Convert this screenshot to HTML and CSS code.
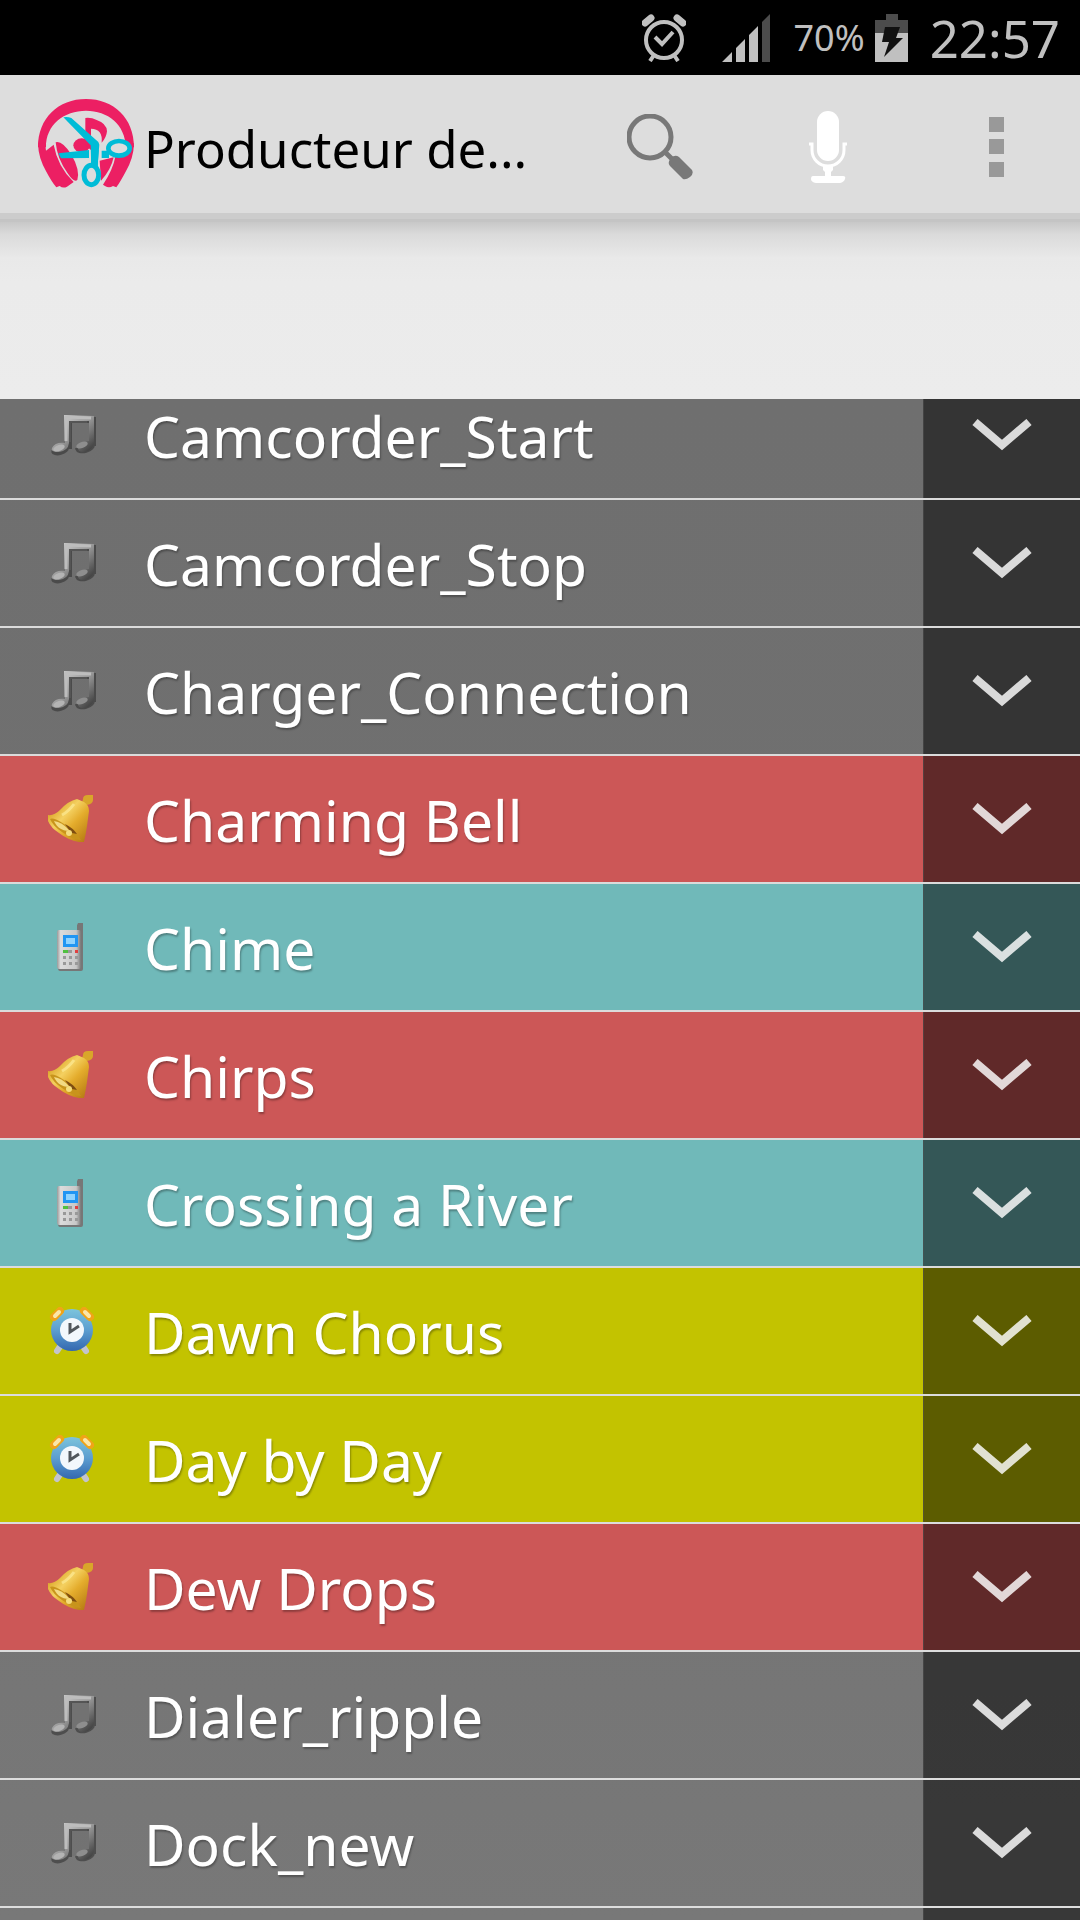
FILE: index.html
```
<!DOCTYPE html>
<html lang="fr">
    <head>
        <meta charset="utf-8">
        <meta name="viewport" content="width=device-width, initial-scale=1.0">
        <title>Producteur de sonneries</title>
        <link rel="stylesheet" href="styles.css">
    </head>
    <body>
        <!-- shared icons -->
        <svg class="defs" width="0" height="0">
            <defs>
                <linearGradient id="noteFill" x1="0" y1="0" x2="1" y2="1">
                    <stop offset="0" stop-color="#e2e2e2"/>
                    <stop offset="0.5" stop-color="#999"/>
                    <stop offset="1" stop-color="#333"/>
                </linearGradient>
                <linearGradient id="bellFill" x1="0" y1="0" x2="1" y2="1">
                    <stop offset="0.1" stop-color="#d49a18"/>
                    <stop offset="0.4" stop-color="#f4d060"/>
                    <stop offset="0.6" stop-color="#e4ac2c"/>
                    <stop offset="1" stop-color="#b07410"/>
                </linearGradient>
                <linearGradient id="phoneFill" x1="0" y1="0" x2="1" y2="0">
                    <stop offset="0" stop-color="#999"/>
                    <stop offset="0.15" stop-color="#dcdcdc"/>
                    <stop offset="0.8" stop-color="#c8c8c8"/>
                    <stop offset="1" stop-color="#777"/>
                </linearGradient>
                <linearGradient id="clockFill" x1="0" y1="0" x2="0" y2="1">
                    <stop offset="0" stop-color="#7cc4dc"/>
                    <stop offset="0.5" stop-color="#5c9ed0"/>
                    <stop offset="1" stop-color="#3468b0"/>
                </linearGradient>
            </defs>
            <symbol id="music" viewBox="0 0 48 48">
                <g fill="#333" opacity="0.6">
                    <path d="M18 6h30v29h-5V13H24v25h-6z"/>
                    <ellipse cx="12" cy="39" rx="9" ry="5" transform="rotate(-15 12 39)"/>
                    <ellipse cx="37" cy="36" rx="10" ry="6" transform="rotate(-15 37 36)"/>
                    <path d="M24 12h19v25H24z" fill="#707070"/>
                </g>
                <path fill="url(#noteFill)" d="M16 4l30 1v25q0 9-10 11q-7 0-6-5q2-6 11-6V10H21v22q-1 8-10 9q-9 0-7-4q3-6 13-5z"/>
                <path fill="none" stroke="#555" stroke-width="2" d="M22 31V11h17"/>
                <path fill="none" stroke="#bdbdbd" stroke-width="3" d="M18 30V6l25 1"/>
                <ellipse cx="11" cy="37" rx="6" ry="3" fill="#b4b4b4" transform="rotate(-20 11 37)"/>
                <ellipse cx="34" cy="34" rx="6" ry="3" fill="#8e8e8e" transform="rotate(-20 34 34)"/>
            </symbol>
            <symbol id="bell" viewBox="0 0 48 48">
                <path fill="#d9a62a" d="M35 4q0-4 5-4h5v5q0 4-6 5l-5-2z"/>
                <path fill="url(#bellFill)" d="M36 7q5 3 5 9l-2 15q-1 7-3 16h-5Q20 45 11 38Q3 33 0 26v-6q6 1 12-5q8-9 17-11z"/>
                <path fill="#c8941c" d="M2 24q3-2 14 5q13 8 17 16q-8 0-19-8Q5 31 2 24z"/>
                <path fill="#f2da84" d="M6 26q8 1 15 9q-3 2-8-1q-5-3-7-8z"/>
                <path fill="#7e4d10" d="M17 29q8 4 12 10l-5-1q-4-4-7-9z"/>
                <circle cx="21" cy="38" r="3" fill="#f4dc7e"/>
                <path fill="none" stroke="#fff0a0" stroke-width="3" opacity="0.6" d="M14 20q7-4 12-11"/>
            </symbol>
            <symbol id="phone" viewBox="0 0 48 48">
                <path fill="#777" d="M30 0h5v46q0 2-2 2H12q-2 0-2-3z"/>
                <path fill="#70b9b9" d="M9 0h20v7H9z"/>
                <rect x="9" y="7" width="24" height="39" rx="2" fill="url(#phoneFill)"/>
                <rect x="15" y="12" width="15" height="12" fill="#2196f3"/>
                <rect x="18" y="15" width="9" height="6" fill="#90d4ff"/>
                <path fill="#50c040" d="M15 27h5v3h-5z"/>
                <path fill="#999" d="M20 27h4v3h-4zM15 33h3v3h-3zM21 33h3v3h-3zM27 33h3v3h-3zM15 39h3v3h-3zM21 39h3v3h-3zM27 39h3v3h-3z"/>
                <path fill="#e04040" d="M27 27h3v3h-3z"/>
            </symbol>
            <symbol id="alarm" viewBox="0 0 48 48">
                <path stroke="#c4c4cc" stroke-width="6" stroke-linecap="round" d="M13 38l-4 6M34 38l4 6"/>
                <circle cx="24" cy="23" r="21" fill="url(#clockFill)"/>
                <path stroke="#f0a418" stroke-width="8" stroke-linecap="round" d="M6 10l6-6M36 4l6 6"/>
                <path stroke="#fbe6a8" stroke-width="4" stroke-linecap="round" d="M7 9l4-4M37 5l4 4"/>
                <circle cx="24" cy="23" r="12" fill="#f2f7fc"/>
                <path fill="none" stroke="#50565c" stroke-width="3" d="M22 16v9l9-6"/>
            </symbol>
            <symbol id="chevron" viewBox="0 0 60 32">
                <path fill="none" stroke="#fff" stroke-opacity="0.82" stroke-width="8" d="M3 3l27 23L57 3"/>
            </symbol>
        </svg>

        <div class="status-bar">
            <svg class="status-alarm" viewBox="0 0 44 48" width="44" height="48">
                <circle cx="22" cy="26" r="18" fill="none" stroke="#c0c0c0" stroke-width="4"/>
                <path fill="none" stroke="#c0c0c0" stroke-width="4" d="M13 23l7 7 11-12M12 41l-4 6M32 41l4 6"/>
                <path stroke="#c0c0c0" stroke-width="7" stroke-linecap="round" d="M3 9l6-5M41 9l-6-5"/>
            </svg>
            <svg class="signal" viewBox="0 0 48 48" width="48" height="48">
                <path fill="#c0c0c0" d="M0 48l10-10v10zM14 34l9-9v23h-9zM27 21l9-9v36h-9z"/>
                <path fill="#4c4c4c" d="M40 8l8-8v48h-8z"/>
            </svg>
            <span class="percent">70%</span>
            <svg class="battery" viewBox="0 0 33 48" width="33" height="48">
                <path fill="#4c4c4c" d="M0 6h11V0h12v6h10v13H0z"/>
                <path fill="#c0c0c0" d="M0 19h33v29H0z"/>
                <path fill="#111" d="M10 13h15l-4 11h7L9 43l5-15H7z"/>
            </svg>
            <span class="time">22:57</span>
        </div>

        <header class="action-bar">
            <svg class="logo" viewBox="37 27 288 288" width="96" height="96">
                <!-- headphones -->
                <path fill="#ec1f63" d="M37 172C37 84 98 27 181 27S325 84 325 172H300C300 104 246 62 181 62S60 104 61 172z"/>
                <path fill="#ec1f63" d="M37 160Q38 205 62 245Q78 275 92 292L102 288Q112 296 124 290L144 276Q96 230 84 164L61 182L58 160z"/>
                <path fill="#ec1f63" d="M325 160Q324 205 300 245Q284 275 272 292L262 288Q250 296 238 288L232 284Q262 240 270 196L300 180V160z"/>
                <path fill="#ec1f63" d="M90 157Q108 150 136 192Q164 240 155 270Q146 280 126 250Q94 206 90 157z"/>
                <path fill="#ec1f63" d="M222 212L264 202Q256 240 226 272z"/>
                <!-- note -->
                <ellipse cx="168" cy="166" rx="25" ry="21" fill="#ec1f63"/>
                <path fill="#ec1f63" d="M179 166V84q18-2 34 6 30 10 31 34-2 20-16 34 4-42-32-42v64z"/>
                <!-- scissors -->
                <path fill="#00bcd7" d="M113 82q12-3 24 2l81 72 3 8-6 72h-18l-2-70z"/>
                <path fill="#00bcd7" d="M98 190l92-10v24l-84 1zM228 182h22v22h-22z"/>
                <ellipse cx="280" cy="175" rx="32" ry="22" fill="#ddd" stroke="#00bcd7" stroke-width="14"/>
                <ellipse cx="197" cy="255" rx="22" ry="29" fill="#ddd" stroke="#00bcd7" stroke-width="15"/>
                <path fill="#00bcd7" d="M197 180h22l-3 52h-20z"/>
            </svg>
            <h1 class="title">Producteur de...</h1>
            <button class="action" aria-label="Rechercher">
                <svg viewBox="0 0 66 66" width="66" height="66">
                    <circle cx="23" cy="23" r="21" fill="none" stroke="#787878" stroke-width="5"/>
                    <path stroke="#787878" stroke-width="5" d="M37 37l10 10"/>
                    <path fill="#787878" d="M44 44q4-4 8-1l13 13q2 4-2 7t-7 2L43 52q-3-3 1-8z"/>
                </svg>
            </button>
            <button class="action" aria-label="Enregistrer">
                <svg viewBox="0 0 38 72" width="38" height="72">
                    <rect x="8" y="0" width="22" height="50" rx="11" fill="#fff"/>
                    <path fill="none" stroke="#fff" stroke-width="3" d="M0 33h3v6c0 9 7 16 16 16s16-7 16-16v-6h3"/>
                    <path fill="#fff" d="M14 55h10v4l-2 2v4h12q3 0 2 3t-5 4H7q-5-1-5-4t2-3h12v-4l-2-2z"/>
                </svg>
            </button>
            <button class="action" aria-label="Menu">
                <svg viewBox="0 0 15 60" width="15" height="60">
                    <path fill="#999" d="M0 0h15v15H0zM0 22h15v15H0zM0 45h15v15H0z"/>
                </svg>
            </button>
        </header>

        <div class="banner"></div>

        <ul class="sounds">
            <li class="sound">
                <svg class="icon"><use href="#music"/></svg>
                <span class="name">Camcorder_Start</span>
                <button class="more" aria-label="Options"><svg class="chevron"><use href="#chevron"/></svg></button>
            </li>
            <li class="sound">
                <svg class="icon"><use href="#music"/></svg>
                <span class="name">Camcorder_Stop</span>
                <button class="more" aria-label="Options"><svg class="chevron"><use href="#chevron"/></svg></button>
            </li>
            <li class="sound">
                <svg class="icon"><use href="#music"/></svg>
                <span class="name">Charger_Connection</span>
                <button class="more" aria-label="Options"><svg class="chevron"><use href="#chevron"/></svg></button>
            </li>
            <li class="sound notification">
                <svg class="icon"><use href="#bell"/></svg>
                <span class="name">Charming Bell</span>
                <button class="more" aria-label="Options"><svg class="chevron"><use href="#chevron"/></svg></button>
            </li>
            <li class="sound ringtone">
                <svg class="icon"><use href="#phone"/></svg>
                <span class="name">Chime</span>
                <button class="more" aria-label="Options"><svg class="chevron"><use href="#chevron"/></svg></button>
            </li>
            <li class="sound notification">
                <svg class="icon"><use href="#bell"/></svg>
                <span class="name">Chirps</span>
                <button class="more" aria-label="Options"><svg class="chevron"><use href="#chevron"/></svg></button>
            </li>
            <li class="sound ringtone">
                <svg class="icon"><use href="#phone"/></svg>
                <span class="name">Crossing a River</span>
                <button class="more" aria-label="Options"><svg class="chevron"><use href="#chevron"/></svg></button>
            </li>
            <li class="sound alarm">
                <svg class="icon"><use href="#alarm"/></svg>
                <span class="name">Dawn Chorus</span>
                <button class="more" aria-label="Options"><svg class="chevron"><use href="#chevron"/></svg></button>
            </li>
            <li class="sound alarm">
                <svg class="icon"><use href="#alarm"/></svg>
                <span class="name">Day by Day</span>
                <button class="more" aria-label="Options"><svg class="chevron"><use href="#chevron"/></svg></button>
            </li>
            <li class="sound notification">
                <svg class="icon"><use href="#bell"/></svg>
                <span class="name">Dew Drops</span>
                <button class="more" aria-label="Options"><svg class="chevron"><use href="#chevron"/></svg></button>
            </li>
            <li class="sound">
                <svg class="icon"><use href="#music"/></svg>
                <span class="name">Dialer_ripple</span>
                <button class="more" aria-label="Options"><svg class="chevron"><use href="#chevron"/></svg></button>
            </li>
            <li class="sound">
                <svg class="icon"><use href="#music"/></svg>
                <span class="name">Dock_new</span>
                <button class="more" aria-label="Options"><svg class="chevron"><use href="#chevron"/></svg></button>
            </li>
            <li class="sound">
                <span class="name"></span>
                <button class="more" aria-label="Options"></button>
            </li>
        </ul>
    </body>
</html>
```
FILE: styles.css
```
* {
    padding: 0;
    margin: 0;
    box-sizing: border-box;
}

body {
    display: flex;
    flex-direction: column;
    height: 100vh;
    overflow: hidden;
    background: #ececec;
    font-family: "Noto Sans", sans-serif;
}

svg {
    display: block;
    flex-shrink: 0;
}

.defs {
    position: absolute;
}

button {
    display: flex;
    align-items: center;
    justify-content: center;
    border: none;
    background: none;
}

/* status bar */
.status-bar {
    display: flex;
    align-items: center;
    justify-content: flex-end;
    flex-shrink: 0;
    height: 75px;
    padding-right: 20px;
    background: #000;
    color: #c0c0c0;
}

.signal {
    margin-left: 36px;
}

.percent {
    margin-left: 24px;
    font-size: 36px;
}

.battery {
    margin: 0 22px 0 10px;
}

.time {
    font-size: 51px;
}

/* action bar */
.action-bar {
    display: flex;
    align-items: center;
    flex-shrink: 0;
    height: 147px;
    padding-left: 38px;
    border-bottom: 3px solid #c4c4c4;
    box-shadow: inset 0 -6px #ccc;
    background: #ddd;
}

.title {
    flex: 1;
    margin-left: 10px;
    padding-top: 2px;
    font-size: 51px;
    font-weight: 400;
    color: #000;
    white-space: nowrap;
}

.action {
    width: 168px;
    height: 144px;
}

.banner {
    flex-shrink: 0;
    height: 177px;
    background: linear-gradient(#c8c8c8, #dadada 12px, #e9e9e9 36px, #ebebeb 60px, #ececec);
}

/* sound list */
.sounds {
    flex: 1;
    min-height: 0;
    overflow: hidden;
    list-style: none;
    background: linear-gradient(#6f6f6f, #707070 40%, #787878);
}

.sound {
    display: flex;
    align-items: center;
    height: 128px;
    padding-left: 48px;
    border-bottom: 2px solid rgba(255, 255, 255, 0.75);
    background-clip: padding-box;
}

/* the list is scrolled a little past its first row */
.sound:first-child {
    margin-top: -27px;
}

.notification {
    background-color: #cc5757;
}

.ringtone {
    background-color: #70b9b9;
}

.alarm {
    background-color: #c3c300;
}

.icon {
    width: 48px;
    height: 48px;
}

.name {
    flex: 1;
    margin-left: 48px;
    padding-top: 2px;
    font-size: 57px;
    line-height: 64px;
    color: #fff;
    text-shadow: 1px 2px 2px rgba(0, 0, 0, 0.3);
    white-space: nowrap;
}

.more {
    width: 157px;
    height: 100%;
    border-left: 1px solid rgba(80, 80, 80, 0.6);
    background: rgba(0, 0, 0, 0.53);
}

.chevron {
    width: 60px;
    height: 32px;
}
```
